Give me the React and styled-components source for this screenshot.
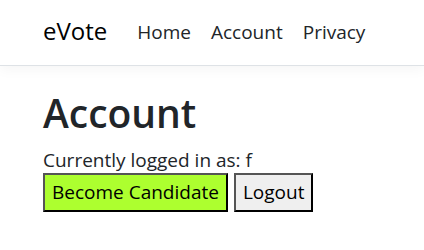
import styled, { createGlobalStyle } from "styled-components"

const Global = createGlobalStyle`
  body {
    margin: 0;
    font-family: "Open Sans", "Noto Sans", sans-serif;
    color: #212529;
    background: #fff;
  }
`

const Nav = styled.header`
  display: flex;
  align-items: center;
  height: 65px;
  padding: 0 43px;
  border-bottom: 1px solid #dee2e6;
  box-shadow: 0 4px 12px rgba(0, 0, 0, 0.04);
`

const Brand = styled.a`
  font-size: 24px;
  color: #000;
  margin-right: 30px;
  margin-top: -4px;
`

const NavLinks = styled.nav`
  display: flex;
  gap: 20px;
  margin-top: -2px;
`

const NavLink = styled.a`
  font-size: 19px;
  color: #212529;
`

const Main = styled.main`
  padding: 24px 43px 0;
`

const Title = styled.h1`
  margin: 0 0 10px;
  font-size: 39px;
  font-weight: 600;
  line-height: 1.2;
`

const Status = styled.p`
  margin: 0;
  font-size: 19px;
  line-height: 26px;
`

const Actions = styled.div`
  display: flex;
  gap: 6px;
`

const Button = styled.button`
  font-family: inherit;
  font-size: 19px;
  line-height: 27px;
  color: #000;
  padding: 4px 7px;
  border: 2px outset #555;
  border-right-color: #000;
  border-bottom-color: #000;
  background: ${p => (p.$primary ? "#adff2f" : "#efefef")};
`

const App = () => {
  return (
    <div>
      <Global />
      <Nav>
        <Brand>eVote</Brand>
        <NavLinks>
          <NavLink>Home</NavLink>
          <NavLink>Account</NavLink>
          <NavLink>Privacy</NavLink>
        </NavLinks>
      </Nav>
      <Main>
        <Title>Account</Title>
        <Status>Currently logged in as: f</Status>
        <Actions>
          <Button $primary>Become Candidate</Button>
          <Button>Logout</Button>
        </Actions>
      </Main>
    </div>
  )
}

export default App
